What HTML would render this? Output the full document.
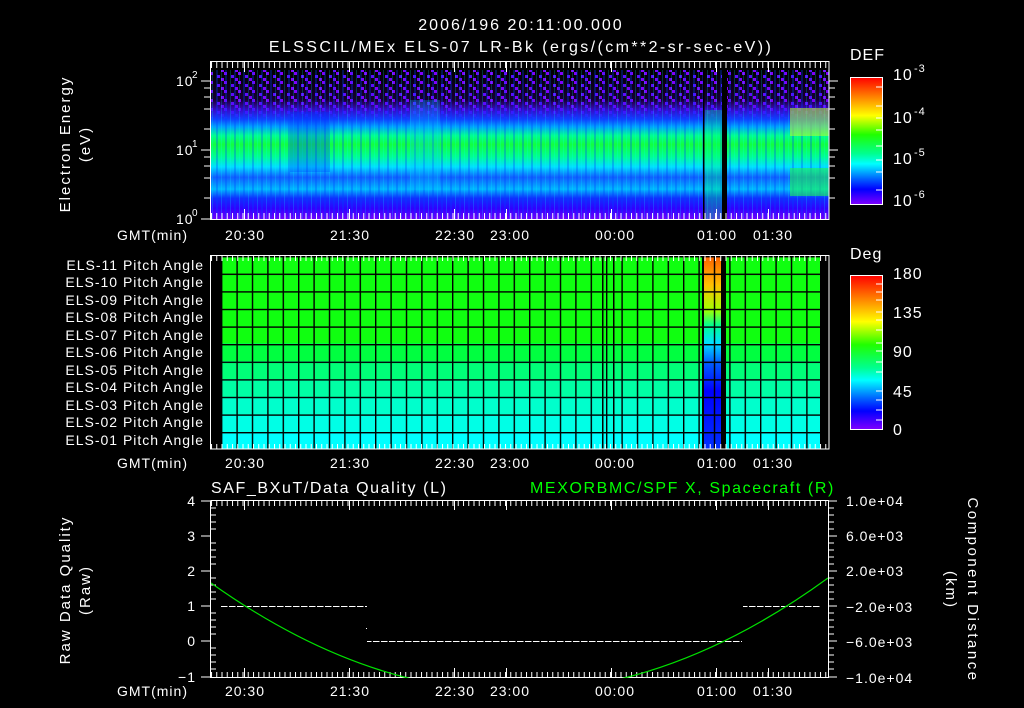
<!DOCTYPE html>
<html><head><meta charset="utf-8"><style>
html,body{margin:0;padding:0;background:#000;width:1024px;height:708px;overflow:hidden}
svg{display:block}
text{font-family:"Liberation Sans",sans-serif;fill:#fff;font-size:14px;letter-spacing:1px}
</style></head><body>
<svg width="1024" height="708" viewBox="0 0 1024 708" xmlns="http://www.w3.org/2000/svg">
<defs>
<linearGradient id="spec" x1="0" y1="0" x2="0" y2="1">
<stop offset="0" stop-color="#6a00ff" stop-opacity="0"/>
<stop offset="0.2" stop-color="#6a00ff" stop-opacity="0.2"/>
<stop offset="0.27" stop-color="#4010ff" stop-opacity="0.8"/>
<stop offset="0.33" stop-color="#1040ff"/>
<stop offset="0.38" stop-color="#00a0ff"/>
<stop offset="0.44" stop-color="#00ff90"/>
<stop offset="0.5" stop-color="#10ff40"/>
<stop offset="0.58" stop-color="#00ff90"/>
<stop offset="0.65" stop-color="#00e0ff"/>
<stop offset="0.72" stop-color="#1060ff"/>
<stop offset="0.8" stop-color="#00b8ff"/>
<stop offset="0.86" stop-color="#1030ff"/>
<stop offset="0.93" stop-color="#3000ff"/>
<stop offset="1" stop-color="#7000ff"/>
</linearGradient>
<pattern id="speck" width="14" height="9" patternUnits="userSpaceOnUse">
<rect x="0" y="0" width="3" height="3" fill="#8000ff"/>
<rect x="7" y="3" width="3" height="3" fill="#5a10ff"/>
<rect x="11" y="6" width="3" height="3" fill="#8000ff"/>
</pattern>
<pattern id="vstr" width="9" height="10" patternUnits="userSpaceOnUse">
<rect x="0" y="0" width="2" height="10" fill="#0040ff" opacity="0.3"/>
<rect x="5" y="0" width="1" height="10" fill="#00ffff" opacity="0.2"/>
</pattern>
<linearGradient id="defbar" x1="0" y1="0" x2="0" y2="1">
<stop offset="0" stop-color="#ff0000"/>
<stop offset="0.15" stop-color="#ff8000"/>
<stop offset="0.3" stop-color="#ffff00"/>
<stop offset="0.45" stop-color="#20ff00"/>
<stop offset="0.6" stop-color="#00ff90"/>
<stop offset="0.68" stop-color="#00ffff"/>
<stop offset="0.8" stop-color="#0060ff"/>
<stop offset="0.88" stop-color="#0000ff"/>
<stop offset="1" stop-color="#8000ff"/>
</linearGradient>
<linearGradient id="anom" x1="0" y1="0" x2="0" y2="1">
<stop offset="0" stop-color="#ff6000"/>
<stop offset="0.15" stop-color="#ffc000"/>
<stop offset="0.28" stop-color="#a0ff00"/>
<stop offset="0.36" stop-color="#00ff90"/>
<stop offset="0.45" stop-color="#00e0ff"/>
<stop offset="0.55" stop-color="#0060ff"/>
<stop offset="0.7" stop-color="#0000ff"/>
<stop offset="1" stop-color="#0030ff"/>
</linearGradient>
<pattern id="topTicks" x="211" y="0" width="5.25" height="10" patternUnits="userSpaceOnUse">
<rect x="0" y="0" width="1" height="10" fill="#fff"/>
</pattern>
<pattern id="grid" x="221" y="256" width="15.4" height="17.6" patternUnits="userSpaceOnUse">
<rect x="0" y="0" width="1.4" height="17.6" fill="#000"/>
<rect x="0" y="0" width="15.4" height="1.4" fill="#000"/>
</pattern>
<pattern id="dash" x="221" y="0" width="8" height="1" patternUnits="userSpaceOnUse">
<rect x="0" y="0" width="6.5" height="1" fill="#fff"/>
</pattern>
<clipPath id="bclip"><rect x="211" y="500" width="617" height="178"/></clipPath>
</defs>

<text x="521" y="30" text-anchor="middle" style="font-size:16px;letter-spacing:2px">2006/196  20:11:00.000</text>
<text x="521" y="52" text-anchor="middle" style="font-size:16px;letter-spacing:2.4px">ELSSCIL/MEx ELS-07 LR-Bk  (ergs/(cm**2-sr-sec-eV))</text>

<!-- TOP PANEL -->
<rect x="211" y="70" width="618" height="149" fill="url(#speck)"/>
<rect x="211" y="70" width="618" height="149" fill="url(#spec)"/>
<rect x="211" y="70" width="618" height="149" fill="url(#vstr)"/>
<rect x="290" y="112" width="40" height="60" fill="#0030ff" opacity="0.3"/>
<rect x="410" y="100" width="30" height="90" fill="#00c0ff" opacity="0.25"/>
<rect x="705" y="110" width="17" height="109" fill="#00ff60" opacity="0.3"/>
<rect x="790" y="108" width="39" height="28" fill="#c0ff20" opacity="0.55"/>
<rect x="790" y="168" width="39" height="28" fill="#20ff40" opacity="0.55"/>
<rect x="703" y="70" width="1.5" height="149" fill="#000"/>
<rect x="722" y="70" width="5" height="149" fill="#000"/>
<rect x="211" y="62" width="618" height="6" fill="url(#topTicks)"/>
<rect x="211" y="213" width="618" height="6" fill="url(#topTicks)"/>
<g fill="#fff">
<rect x="244" y="62" width="1" height="10"/><rect x="349" y="62" width="1" height="10"/><rect x="454" y="62" width="1" height="10"/><rect x="506" y="62" width="1" height="10"/><rect x="611" y="62" width="1" height="10"/><rect x="716" y="62" width="1" height="10"/><rect x="768" y="62" width="1" height="10"/>
<rect x="244" y="209" width="1" height="10"/><rect x="349" y="209" width="1" height="10"/><rect x="454" y="209" width="1" height="10"/><rect x="506" y="209" width="1" height="10"/><rect x="611" y="209" width="1" height="10"/><rect x="716" y="209" width="1" height="10"/><rect x="768" y="209" width="1" height="10"/>
</g>
<rect x="210.5" y="61.5" width="618.5" height="158" fill="none" stroke="#fff" stroke-width="1"/>
<g stroke="#fff" stroke-width="1">
<path d="M201 81H210M201 150H210M201 219H210M204 88H210M204 97H210M204 109H210M204 129H210M204 157H210M204 166H210M204 178H210M204 198H210"/>
<path d="M829 81H838M829 150H838M829 88H835M829 97H835M829 109H835M829 129H835M829 157H835M829 166H835M829 178H835M829 198H835"/>
</g>
<text x="176" y="86">10</text><text x="192" y="78" style="font-size:10px">2</text>
<text x="176" y="155">10</text><text x="192" y="147" style="font-size:10px">1</text>
<text x="176" y="224">10</text><text x="192" y="216" style="font-size:10px">0</text>
<text transform="translate(70,144) rotate(-90)" text-anchor="middle" style="font-size:15px;letter-spacing:2px">Electron Energy</text>
<text transform="translate(90,144) rotate(-90)" text-anchor="middle" style="font-size:15px;letter-spacing:2px">(eV)</text>
<text x="117" y="240">GMT(min)</text>
<g text-anchor="middle">
<text x="245" y="240">20:30</text><text x="350" y="240">21:30</text><text x="455" y="240">22:30</text><text x="510" y="240">23:00</text><text x="615" y="240">00:00</text><text x="717" y="240">01:00</text><text x="773" y="240">01:30</text>
</g>
<text x="850" y="60" style="font-size:16px">DEF</text>
<rect x="850.5" y="77.5" width="32" height="127" fill="url(#defbar)" stroke="#fff"/>
<path d="M876 87H882M876 106H882M876 118H882M876 130H882M876 146H882M876 160H882M876 172H882M876 190H882" stroke="#fff"/>
<text x="893" y="80" style="font-size:16px">10</text><text x="914" y="72" style="font-size:11px">-3</text>
<text x="893" y="123" style="font-size:16px">10</text><text x="914" y="115" style="font-size:11px">-4</text>
<text x="893" y="164" style="font-size:16px">10</text><text x="914" y="156" style="font-size:11px">-5</text>
<text x="893" y="206" style="font-size:16px">10</text><text x="914" y="198" style="font-size:11px">-6</text>

<!-- MIDDLE PANEL -->
<g>
<rect x="221" y="256" width="599" height="88" fill="#10ff10"/>
<rect x="221" y="343" width="599" height="18" fill="#00ff40"/>
<rect x="221" y="361" width="599" height="18" fill="#00ff78"/>
<rect x="221" y="379" width="599" height="18" fill="#00ffa4"/>
<rect x="221" y="397" width="599" height="18" fill="#00ffcc"/>
<rect x="221" y="415" width="599" height="17" fill="#00ffe6"/>
<rect x="221" y="432" width="599" height="17" fill="#00ffff"/>
<rect x="704" y="256" width="18" height="193" fill="url(#anom)"/>
<rect x="221" y="256" width="599" height="193" fill="url(#grid)"/>
<rect x="602" y="256" width="1.5" height="193" fill="#000"/><rect x="613" y="256" width="1.5" height="193" fill="#000"/>
<rect x="702" y="256" width="2" height="193" fill="#000"/>
<rect x="721" y="256" width="5" height="193" fill="#000"/>
<rect x="211" y="256" width="618" height="5" fill="url(#topTicks)"/>
<rect x="211" y="444" width="618" height="5" fill="url(#topTicks)"/>
<rect x="210.5" y="255.5" width="618.5" height="193.5" fill="none" stroke="#fff"/>
</g>
<g text-anchor="end" style="letter-spacing:1.6px">
<text x="204" y="270">ELS-11 Pitch Angle</text>
<text x="204" y="287">ELS-10 Pitch Angle</text>
<text x="204" y="305">ELS-09 Pitch Angle</text>
<text x="204" y="322">ELS-08 Pitch Angle</text>
<text x="204" y="340">ELS-07 Pitch Angle</text>
<text x="204" y="357">ELS-06 Pitch Angle</text>
<text x="204" y="375">ELS-05 Pitch Angle</text>
<text x="204" y="392">ELS-04 Pitch Angle</text>
<text x="204" y="410">ELS-03 Pitch Angle</text>
<text x="204" y="427">ELS-02 Pitch Angle</text>
<text x="204" y="445">ELS-01 Pitch Angle</text>
</g>
<text x="117" y="468">GMT(min)</text>
<g text-anchor="middle">
<text x="245" y="468">20:30</text><text x="350" y="468">21:30</text><text x="455" y="468">22:30</text><text x="510" y="468">23:00</text><text x="615" y="468">00:00</text><text x="717" y="468">01:00</text><text x="773" y="468">01:30</text>
</g>
<text x="850" y="259" style="font-size:16px">Deg</text>
<rect x="850.5" y="275.5" width="32" height="154" fill="url(#defbar)" stroke="#fff"/>
<path d="M876 284H882M876 292H882M876 300H882M876 312H882M876 320H882M876 330H882M876 343H882M876 351H882M876 362H882M876 372H882M876 391H882M876 400H882M876 410H882M876 420H882" stroke="#fff"/>
<text x="893" y="279" style="font-size:16px">180</text>
<text x="893" y="318" style="font-size:16px">135</text>
<text x="893" y="357" style="font-size:16px">90</text>
<text x="893" y="397" style="font-size:16px">45</text>
<text x="893" y="435" style="font-size:16px">0</text>

<!-- BOTTOM PANEL -->
<text x="211" y="493" style="font-size:16px;letter-spacing:1.6px">SAF_BXuT/Data Quality (L)</text>
<text x="530" y="493" style="font-size:16px;letter-spacing:1.6px;fill:#00ff00">MEXORBMC/SPF X, Spacecraft (R)</text>
<rect x="211" y="501" width="617" height="5" fill="url(#topTicks)"/>
<rect x="211" y="672" width="617" height="5" fill="url(#topTicks)"/>
<g fill="#fff">
<rect x="244" y="501" width="1" height="9"/><rect x="349" y="501" width="1" height="9"/><rect x="454" y="501" width="1" height="9"/><rect x="506" y="501" width="1" height="9"/><rect x="611" y="501" width="1" height="9"/><rect x="716" y="501" width="1" height="9"/><rect x="768" y="501" width="1" height="9"/>
<rect x="244" y="668" width="1" height="9"/><rect x="349" y="668" width="1" height="9"/><rect x="454" y="668" width="1" height="9"/><rect x="506" y="668" width="1" height="9"/><rect x="611" y="668" width="1" height="9"/><rect x="716" y="668" width="1" height="9"/><rect x="768" y="668" width="1" height="9"/>
</g>
<path d="M210.5 500.5V677.5H828.5V500.5H210.5" fill="none" stroke="#fff"/>
<g stroke="#fff">
<path d="M201 501H210M201 536H210M201 571H210M201 606H210M201 641H210M201 677H210"/>
<path d="M210 508H216M210 515H216M210 522H216M210 529H216M210 543H216M210 550H216M210 557H216M210 564H216M210 578H216M210 585H216M210 592H216M210 599H216M210 613H216M210 620H216M210 627H216M210 634H216M210 648H216M210 655H216M210 662H216M210 669H216"/>
<path d="M828 501H837M828 536H837M828 571H837M828 606H837M828 641H837M828 677H837"/>
<path d="M828 508H834M828 515H834M828 522H834M828 529H834M828 543H834M828 550H834M828 557H834M828 564H834M828 578H834M828 585H834M828 592H834M828 599H834M828 613H834M828 620H834M828 627H834M828 634H834M828 648H834M828 655H834M828 662H834M828 669H834"/>
</g>
<g text-anchor="end">
<text x="196" y="506">4</text><text x="196" y="541">3</text><text x="196" y="576">2</text><text x="196" y="611">1</text><text x="196" y="646">0</text><text x="196" y="682">−1</text>
</g>
<text transform="translate(70,590) rotate(-90)" text-anchor="middle" style="font-size:15px;letter-spacing:2px">Raw Data Quality</text>
<text transform="translate(90,590) rotate(-90)" text-anchor="middle" style="font-size:15px;letter-spacing:2px">(Raw)</text>
<text x="846" y="506">1.0e+04</text>
<text x="846" y="541">6.0e+03</text>
<text x="846" y="576">2.0e+03</text>
<text x="846" y="612">−2.0e+03</text>
<text x="846" y="647">−6.0e+03</text>
<text x="846" y="683">−1.0e+04</text>
<text transform="translate(968,590) rotate(90)" text-anchor="middle" style="font-size:15px;letter-spacing:2.5px">Component Distance</text>
<text transform="translate(946,590) rotate(90)" text-anchor="middle" style="font-size:15px;letter-spacing:2px">(km)</text>
<rect x="221" y="606" width="146" height="1" fill="url(#dash)"/>
<rect x="366" y="628" width="1" height="1" fill="#fff"/>
<rect x="367" y="641" width="375" height="1" fill="url(#dash)"/>
<rect x="743" y="606" width="78" height="1" fill="url(#dash)"/>
<path d="M211 583Q519.5 802.8 828 578" fill="none" stroke="#00e000" stroke-width="1.2" clip-path="url(#bclip)"/>
<text x="117" y="696">GMT(min)</text>
<g text-anchor="middle">
<text x="245" y="696">20:30</text><text x="350" y="696">21:30</text><text x="455" y="696">22:30</text><text x="510" y="696">23:00</text><text x="615" y="696">00:00</text><text x="717" y="696">01:00</text><text x="773" y="696">01:30</text>
</g>
</svg>
</body></html>
